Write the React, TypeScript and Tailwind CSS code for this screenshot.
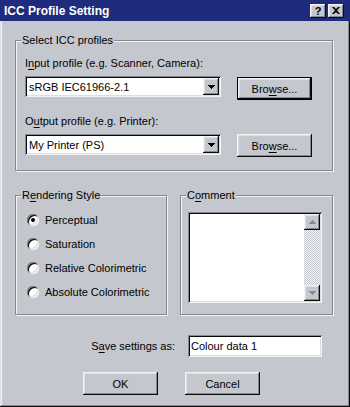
import React from "react";

const BG = "bg-[#c4c7ce]";
const RAISED =
  "shadow-[inset_-1px_-1px_#0a0a0a,inset_1px_1px_#f4f4f4,inset_-2px_-2px_#858990,inset_2px_2px_#dcdee2]";
const SUNKEN =
  "shadow-[inset_1px_1px_#858990,inset_-1px_-1px_#f4f4f4,inset_2px_2px_#0a0a0a,inset_-2px_-2px_#dcdee2]";

function Group({
  label,
  className,
  children,
}: {
  label: React.ReactNode;
  className: string;
  children?: React.ReactNode;
}) {
  return (
    <div
      className={
        "relative border border-[#85898f] shadow-[inset_1px_1px_#f4f4f4,1px_1px_#f4f4f4] " +
        className
      }
    >
      <span className={"absolute -top-[8px] left-[5px] px-[1px] leading-[14px] " + BG}>
        {label}
      </span>
      {children}
    </div>
  );
}

function Arrow({ color = "#000", up }: { color?: string; up?: boolean }) {
  return (
    <svg width="7" height="4" viewBox="0 0 7 4" className={up ? "rotate-180" : ""}>
      <path d="M0 0h7v1h-1v1h-1v1h-1v1h-1v-1h-1v-1h-1v-1h-1z" fill={color} />
    </svg>
  );
}

function Combo({ value }: { value: string }) {
  return (
    <div className={"w-[196px] h-[21px] bg-white flex items-stretch p-[2px] " + SUNKEN}>
      <div className="flex-1 flex items-center pl-[2px] leading-[14px]">{value}</div>
      <div className={"w-[16px] flex items-center justify-center " + BG + " " + RAISED}>
        <Arrow />
      </div>
    </div>
  );
}

function Button({
  children,
  def,
  className = "",
}: {
  children: React.ReactNode;
  def?: boolean;
  className?: string;
}) {
  return (
    <div
      className={
        "w-[75px] h-[23px] flex items-center justify-center leading-[14px] " +
        BG +
        " " +
        (def ? "border border-black " : "") +
        RAISED +
        " " +
        className
      }
    >
      {children}
    </div>
  );
}

function Radio({ checked, label }: { checked?: boolean; label: string }) {
  return (
    <div className="h-[24px] flex items-center">
      <div className="w-[12px] h-[12px] rounded-full bg-white flex items-center justify-center shadow-[inset_1px_1px_#858990,inset_-1px_-1px_#f4f4f4,inset_2px_2px_#0a0a0a,inset_-2px_-2px_#dcdee2]">
        {checked && <div className="w-[4px] h-[4px] rounded-full bg-black" />}
      </div>
      <span className="ml-[6px] leading-[14px]">{label}</span>
    </div>
  );
}

export default function App() {
  return (
    <div
      className={
        "w-[350px] h-[407px] flex flex-col overflow-hidden text-[11px] text-black font-['Liberation_Sans',Arial,sans-serif] " +
        BG +
        " shadow-[inset_-1px_-1px_#0a0a0a,inset_1px_1px_#dcdee2,inset_-2px_-2px_#858990,inset_2px_2px_#f4f4f4]"
      }
    >
      {/* Title bar */}
      <div className="h-[21px] bg-[#1f2b7c] flex items-center justify-between pl-[4px] pr-[6px]">
        <span className="text-white font-bold text-[12px] leading-[14px]">ICC Profile Setting</span>
        <div className="flex gap-[2px]">
          <div className={"w-[16px] h-[14px] flex items-center justify-center font-bold text-[11px] leading-[10px] " + BG + " " + RAISED}>
            ?
          </div>
          <div className={"w-[16px] h-[14px] flex items-center justify-center " + BG + " " + RAISED}>
            <svg width="8" height="7" viewBox="0 0 8 7">
              <path d="M0 0h2l2 2 2-2h2l-3 3.5 3 3.5h-2l-2-2-2 2h-2l3-3.5z" fill="#000" />
            </svg>
          </div>
        </div>
      </div>

      {/* Select ICC profiles */}
      <Group label="Select ICC profiles" className="ml-[15px] mt-[19px] w-[318px] h-[131px] px-[9px] pt-[15px]">
        <div className="leading-[14px]">
          I<u className="underline-offset-[2px]">n</u>put profile (e.g. Scanner, Camera):
        </div>
        <div className="mt-[6px] h-[21px] flex items-start">
          <Combo value="sRGB IEC61966-2.1" />
          <Button def className="ml-[16px] mt-[1px]">
            <span>
              Bro<u className="underline-offset-[2px]">w</u>se...
            </span>
          </Button>
        </div>
        <div className="mt-[17px] leading-[14px]">
          O<u className="underline-offset-[2px]">u</u>tput profile (e.g. Printer):
        </div>
        <div className="mt-[6px] h-[21px] flex items-start">
          <Combo value="My Printer (PS)" />
          <Button className="ml-[16px]">
            <span>
              Bro<u className="underline-offset-[2px]">w</u>se...
            </span>
          </Button>
        </div>
      </Group>

      {/* Rendering + Comment */}
      <div className="ml-[15px] mt-[24px] flex gap-[13px]">
        <Group
          label={
            <span>
              R<u className="underline-offset-[2px]">e</u>ndering Style
            </span>
          }
          className="w-[152px] h-[120px] pl-[11px] pt-[12px]"
        >
          <Radio checked label="Perceptual" />
          <Radio label="Saturation" />
          <Radio label="Relative Colorimetric" />
          <Radio label="Absolute Colorimetric" />
        </Group>
        <Group
          label={
            <span>
              C<u className="underline-offset-[2px]">o</u>mment
            </span>
          }
          className="w-[153px] h-[120px] pl-[7px] pt-[16px]"
        >
          <div className={"w-[134px] h-[91px] bg-white p-[2px] flex justify-end " + SUNKEN}>
            <div className="w-[16px] h-full flex flex-col bg-[repeating-conic-gradient(#f4f4f4_0_25%,#c4c7ce_0_50%)] bg-[length:2px_2px]">
              <div className={"w-[16px] h-[16px] flex items-center justify-center " + BG + " " + RAISED}>
                <Arrow color="#858990" up />
              </div>
              <div className="flex-1" />
              <div className={"w-[16px] h-[16px] flex items-center justify-center " + BG + " " + RAISED}>
                <Arrow color="#858990" />
              </div>
            </div>
          </div>
        </Group>
      </div>

      {/* Save row */}
      <div className="mt-[20px] flex items-center">
        <div className="w-[175px] text-right leading-[14px]">
          S<u className="underline-offset-[2px]">a</u>ve settings as:
        </div>
        <div className={"ml-[13px] w-[134px] h-[22px] bg-white flex items-center pl-[3px] leading-[14px] " + SUNKEN}>
          Colour data 1
        </div>
      </div>

      {/* Buttons */}
      <div className="mt-[15px] pl-[83px] flex gap-[27px]">
        <Button>OK</Button>
        <Button>Cancel</Button>
      </div>
    </div>
  );
}
